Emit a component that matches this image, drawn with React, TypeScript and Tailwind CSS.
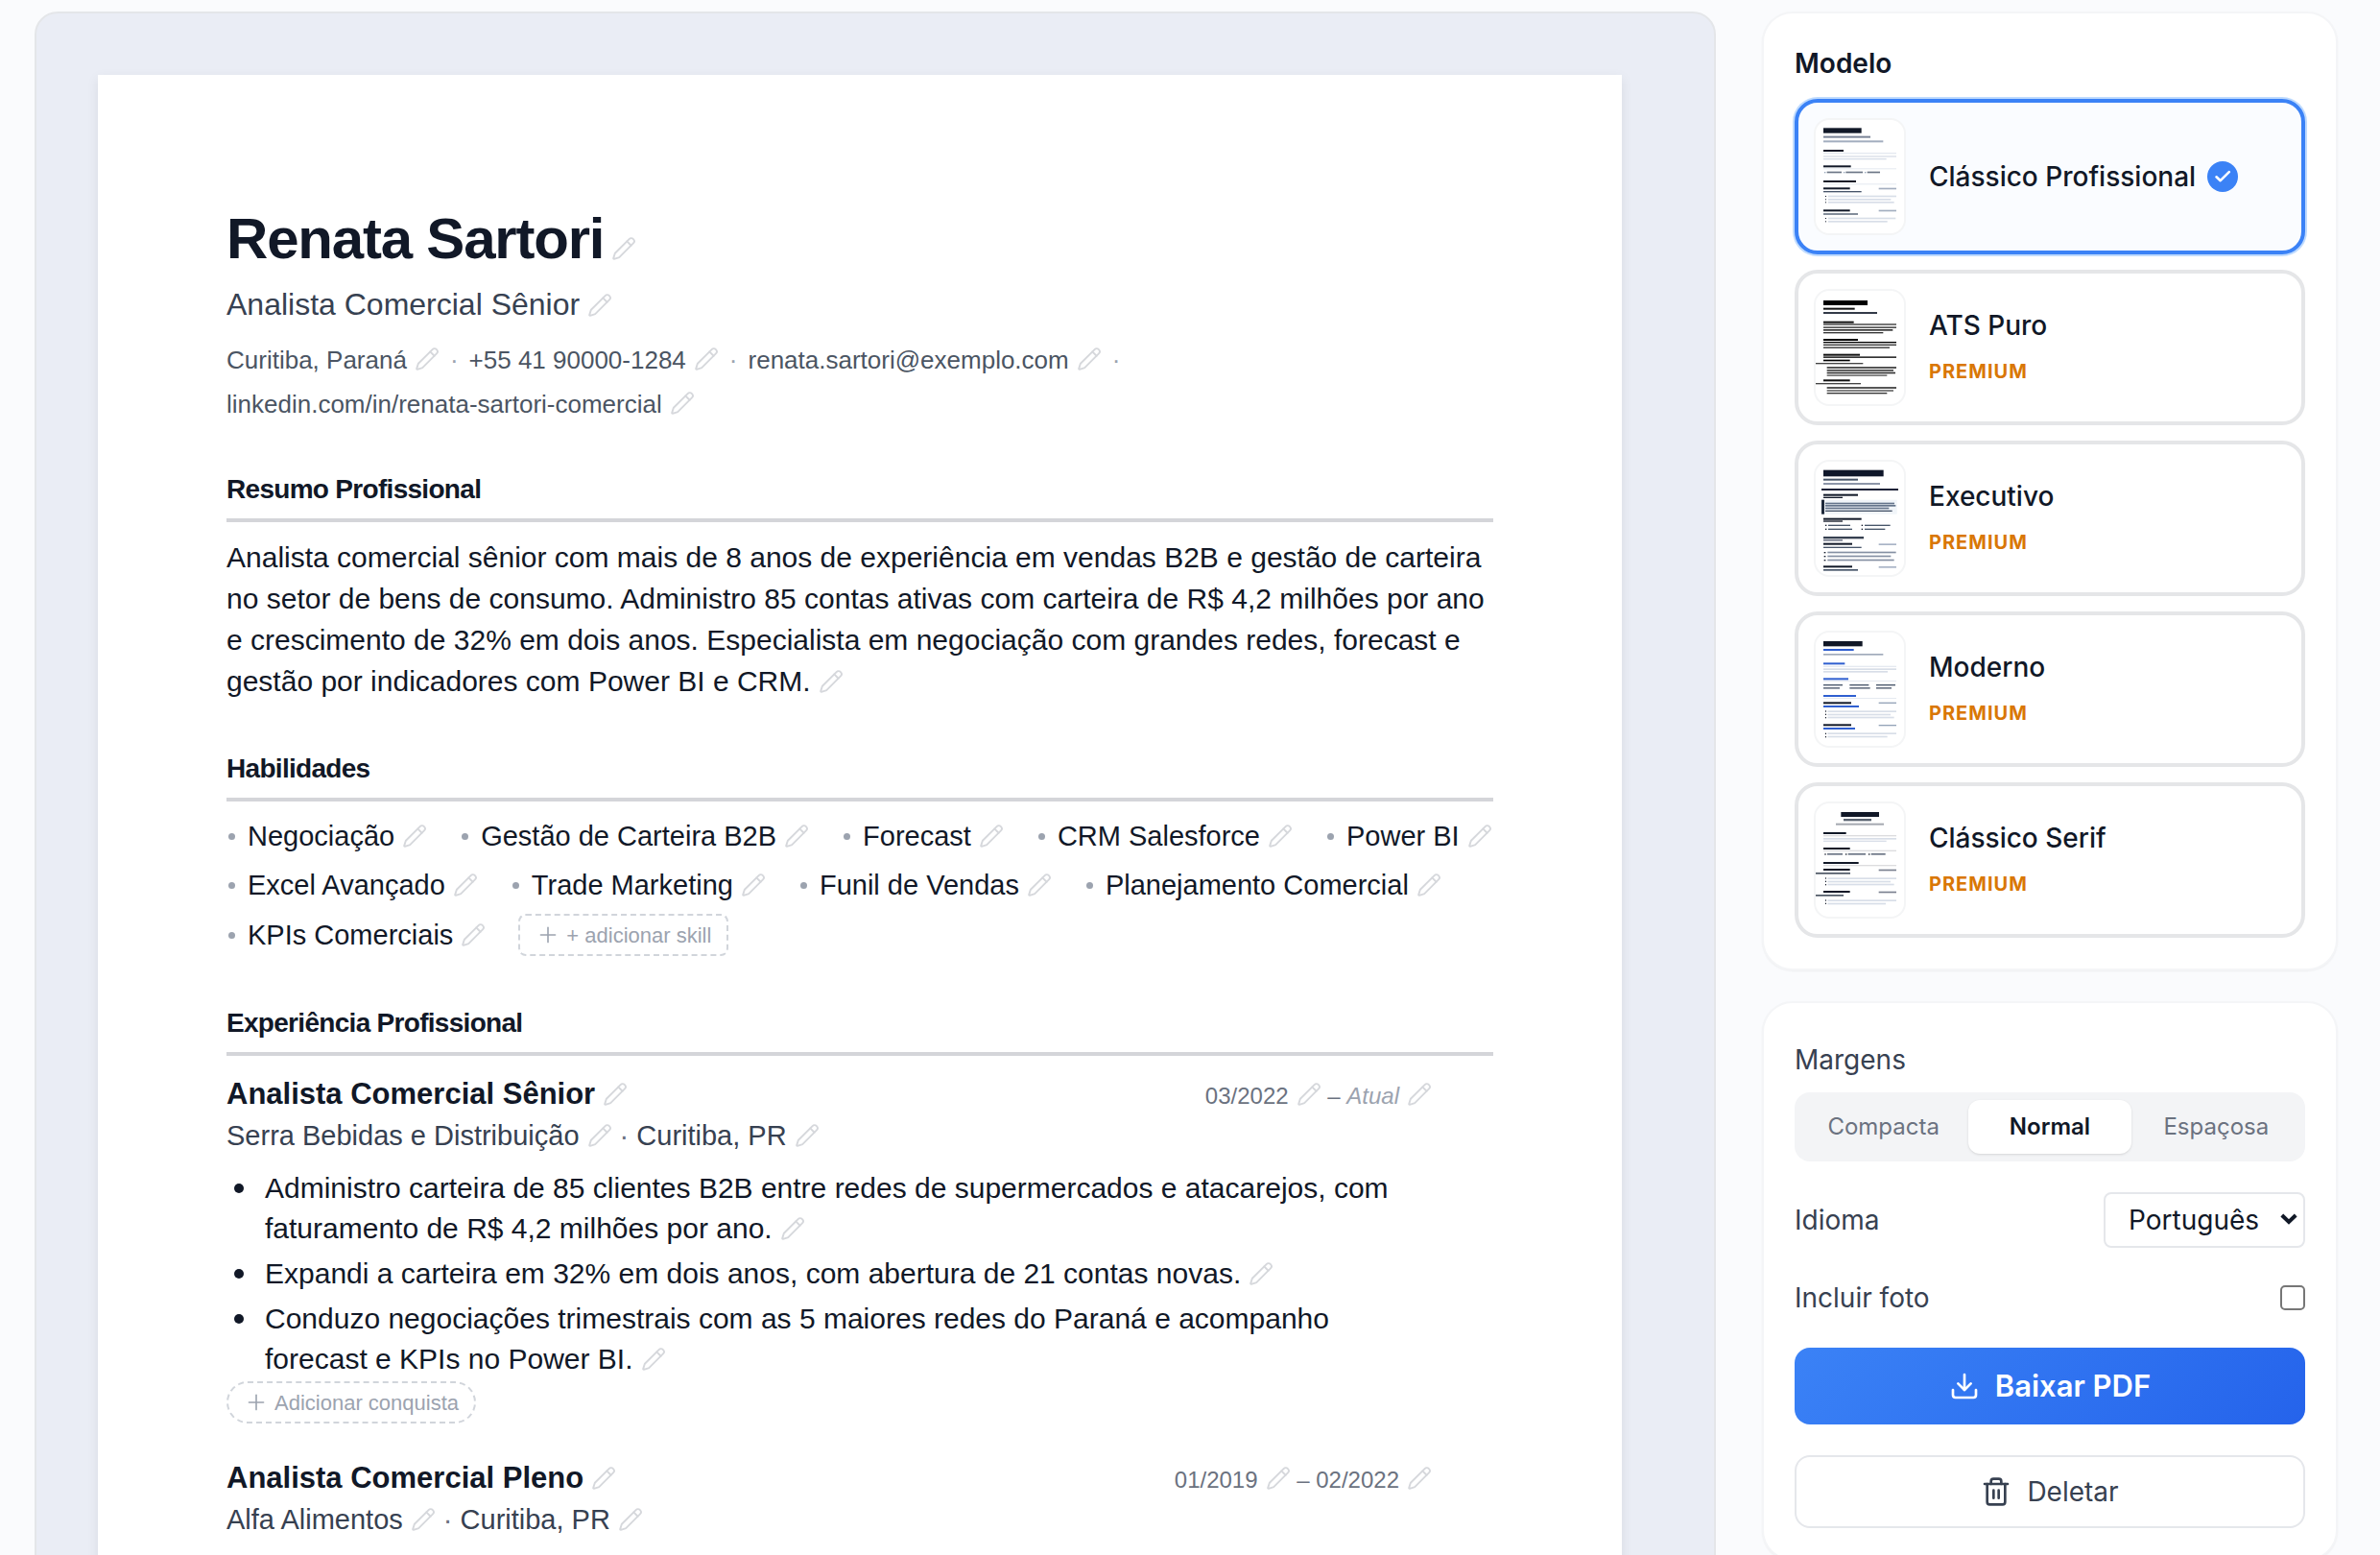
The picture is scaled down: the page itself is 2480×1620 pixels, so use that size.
import React from 'react';
import clsx from 'clsx';
import { Download, Pencil, Plus, Trash2 } from 'lucide-react';

// x, y, width, height, fill
type Bar = [number, number, number, number, string];

interface Template {
  id: string;
  name: string;
  premium: boolean;
  viewBox: string;
  bars: Bar[];
}

interface Job {
  role: string;
  company: string;
  city: string;
  start: string;
  end: string | null;
  achievements: string[];
}

const INK = '#111827';
const SLATE = '#475569';
const MIST = '#94a3b8';
const LINE = '#d8dee8';
const PALE = '#e5e9f0';
const BLUE = '#2f5fd0';

const templates: Template[] = [
  {
    id: 'classic',
    name: 'Clássico Profissional',
    premium: false,
    viewBox: '30 68 288 366',
    bars: [
      [60, 99, 119, 16, INK], [60, 124, 147, 6, '#7b8597'], [60, 138, 187, 6, '#a3aebf'],
      [60, 167, 63, 6, INK], [60, 176, 228, 4, PALE], [60, 186, 228, 4, LINE], [60, 194, 197, 4, LINE],
      [60, 216, 86, 6, INK], [60, 225, 228, 3, PALE],
      [63, 236, 4, 4, MIST], [71, 235, 46, 5, '#6b7585'], [123, 236, 4, 4, MIST], [130, 235, 53, 5, '#6b7585'], [189, 236, 4, 4, MIST], [197, 235, 40, 5, '#6b7585'],
      [60, 263, 102, 6, INK], [60, 273, 228, 3, PALE],
      [60, 285, 83, 6, INK], [233, 286, 55, 5, '#a3aebf'], [60, 296, 119, 4, SLATE],
      [66, 311, 3, 3, INK], [75, 310, 213, 5, LINE], [66, 321, 3, 3, INK], [75, 320, 196, 5, LINE], [66, 330, 3, 3, INK], [75, 329, 206, 5, LINE],
      [60, 354, 83, 6, INK], [233, 355, 55, 5, '#a3aebf'], [60, 366, 108, 4, SLATE],
      [66, 380, 3, 3, INK], [75, 379, 211, 5, LINE], [66, 390, 3, 3, INK], [75, 389, 185, 5, LINE],
    ],
  },
  {
    id: 'ats',
    name: 'ATS Puro',
    premium: true,
    viewBox: '30 600 288 366',
    bars: [
      [60, 636, 138, 15, '#000'], [60, 659, 98, 6, '#111'], [60, 672, 168, 6, '#333a48'],
      [60, 701, 95, 6, '#111'], [60, 708, 228, 6, '#777'], [60, 718, 228, 5, '#555'], [60, 726, 217, 5, '#333'], [60, 735, 187, 4, '#333'],
      [60, 756, 108, 6, '#000'], [60, 765, 228, 4, '#000'], [60, 773, 228, 4, '#333'], [60, 781, 207, 5, '#555'],
      [60, 803, 114, 6, '#111'], [60, 811, 228, 5, '#333'], [60, 821, 83, 5, '#000'], [36, 831, 148, 4, '#444'],
      [71, 843, 217, 6, '#555'], [71, 852, 208, 5, '#444'], [71, 860, 214, 5, '#333'], [71, 868, 188, 5, '#777'],
      [60, 883, 83, 6, '#111'], [36, 894, 141, 4, '#444'],
      [71, 906, 217, 6, '#555'], [71, 916, 208, 4, '#444'], [71, 924, 188, 4, '#333'],
    ],
  },
  {
    id: 'executive',
    name: 'Executivo',
    premium: true,
    viewBox: '30 22 288 366',
    bars: [
      [60, 54, 188, 20, '#0f172a'], [60, 81, 108, 6, '#475569'], [60, 94, 177, 6, '#8c96a8'], [54, 112, 240, 6, '#1e2238'],
      [60, 129, 108, 6, INK], [60, 138, 60, 4, INK],
      [60, 147, 230, 45, '#f1f5f9'], [54, 147, 9, 45, '#1e293b'],
      [66, 156, 216, 5, '#64748b'], [66, 163, 220, 5, '#64748b'], [66, 171, 199, 5, '#64748b'], [66, 180, 209, 4, '#475569'],
      [60, 204, 119, 6, INK], [60, 212, 60, 4, INK],
      [66, 225, 4, 4, INK], [75, 225, 69, 4, SLATE], [179, 225, 4, 4, INK], [189, 225, 80, 4, SLATE],
      [66, 237, 4, 4, INK], [75, 237, 75, 4, SLATE], [179, 237, 4, 4, INK], [189, 237, 64, 4, SLATE],
      [60, 262, 126, 7, '#374151'], [60, 271, 60, 5, '#7b8190'],
      [60, 282, 90, 6, INK], [233, 284, 55, 5, '#a9b4c6'], [60, 294, 119, 4, SLATE],
      [62, 310, 5, 4, INK], [73, 309, 214, 5, '#8590a3'], [62, 322, 5, 4, INK], [73, 321, 198, 5, '#8590a3'], [62, 334, 5, 4, INK], [73, 333, 208, 5, '#8590a3'],
      [60, 353, 90, 6, INK], [233, 355, 55, 5, '#a9b4c6'], [60, 364, 108, 5, SLATE],
    ],
  },
  {
    id: 'modern',
    name: 'Moderno',
    premium: true,
    viewBox: '30 558 288 366',
    bars: [
      [60, 591, 122, 16, INK], [60, 615, 95, 6, BLUE], [60, 630, 187, 5, '#a0aabb'],
      [60, 658, 67, 6, BLUE], [60, 668, 228, 4, PALE], [60, 676, 228, 5, LINE], [60, 684, 201, 5, LINE],
      [60, 706, 78, 6, BLUE], [60, 714, 228, 3, PALE],
      [60, 726, 60, 4, SLATE], [142, 726, 60, 4, SLATE], [225, 726, 60, 4, SLATE],
      [60, 735, 51, 5, '#6b7585'], [142, 735, 64, 5, '#6b7585'], [225, 735, 48, 5, '#6b7585'],
      [60, 759, 102, 6, BLUE], [60, 768, 228, 3, PALE],
      [60, 781, 87, 6, INK], [233, 782, 55, 4, MIST], [60, 792, 111, 6, BLUE],
      [66, 808, 3, 4, INK], [73, 808, 215, 5, LINE], [66, 818, 3, 4, INK], [73, 818, 197, 5, LINE], [66, 828, 3, 4, INK], [73, 827, 208, 5, LINE],
      [60, 850, 87, 6, INK], [233, 852, 55, 4, MIST], [60, 861, 99, 6, BLUE],
      [66, 878, 3, 4, INK], [73, 877, 215, 5, LINE], [66, 888, 3, 4, INK], [73, 887, 187, 5, LINE],
    ],
  },
  {
    id: 'serif',
    name: 'Clássico Serif',
    premium: true,
    viewBox: '30 1098 288 366',
    bars: [
      [115, 1131, 119, 15, INK], [123, 1152, 87, 7, '#5b6472'], [99, 1166, 150, 6, '#a5a9b0'],
      [60, 1194, 71, 6, INK], [60, 1203, 228, 4, '#dcdcde'], [60, 1212, 228, 5, LINE], [60, 1220, 197, 4, LINE],
      [60, 1242, 83, 6, INK], [60, 1250, 228, 4, '#dcdcde'],
      [64, 1261, 4, 4, INK], [72, 1260, 48, 5, '#6b7585'], [129, 1261, 4, 4, INK], [137, 1260, 55, 5, '#6b7585'], [201, 1261, 4, 4, INK], [209, 1260, 45, 5, '#6b7585'],
      [60, 1287, 110, 6, INK], [60, 1296, 228, 4, '#dcdcde'],
      [60, 1308, 83, 6, INK], [233, 1310, 55, 5, '#7b8190'], [36, 1320, 108, 5, '#4b5563'],
      [66, 1336, 3, 4, INK], [73, 1336, 215, 5, LINE], [66, 1346, 3, 4, INK], [73, 1346, 197, 5, LINE], [66, 1356, 3, 4, INK], [73, 1355, 208, 5, LINE],
      [60, 1377, 83, 6, INK], [233, 1379, 55, 5, '#7b8190'], [36, 1389, 87, 5, '#4b5563'],
      [66, 1405, 3, 4, INK], [73, 1405, 215, 5, LINE], [66, 1415, 3, 4, INK], [73, 1415, 182, 5, LINE],
    ],
  },
];

const contacts = ['Curitiba, Paraná', '+55 41 90000-1284', 'renata.sartori@exemplo.com', 'linkedin.com/in/renata-sartori-comercial'];

const skills = [
  'Negociação',
  'Gestão de Carteira B2B',
  'Forecast',
  'CRM Salesforce',
  'Power BI',
  'Excel Avançado',
  'Trade Marketing',
  'Funil de Vendas',
  'Planejamento Comercial',
  'KPIs Comerciais',
];

const jobs: Job[] = [
  {
    role: 'Analista Comercial Sênior',
    company: 'Serra Bebidas e Distribuição',
    city: 'Curitiba, PR',
    start: '03/2022',
    end: null,
    achievements: [
      'Administro carteira de 85 clientes B2B entre redes de supermercados e atacarejos, com faturamento de R$ 4,2 milhões por ano.',
      'Expandi a carteira em 32% em dois anos, com abertura de 21 contas novas.',
      'Conduzo negociações trimestrais com as 5 maiores redes do Paraná e acompanho forecast e KPIs no Power BI.',
    ],
  },
  {
    role: 'Analista Comercial Pleno',
    company: 'Alfa Alimentos',
    city: 'Curitiba, PR',
    start: '01/2019',
    end: '02/2022',
    achievements: [],
  },
];

const margins = ['Compacta', 'Normal', 'Espaçosa'];

const EditButton: React.FC = () => (
  <button type="button" aria-label="Editar" className="ml-2 inline-block align-[-3px] text-[#d6d8dc]">
    <Pencil className="size-[26px]" strokeWidth={1.75} />
  </button>
);

const Section: React.FC<{ title: string; children: React.ReactNode }> = ({ title, children }) => (
  <section className="mt-13">
    <h2 className="border-b-4 border-[#d4d5d9] pb-3 text-[28px] leading-9 font-bold tracking-tight">{title}</h2>
    {children}
  </section>
);

const AddButton: React.FC<{ label: string; className: string }> = ({ label, className }) => (
  <button
    type="button"
    className={clsx('inline-flex h-11 items-center gap-1.5 border-2 border-dashed border-[#d1d5db] px-4 text-[22px] text-[#9ca3af]', className)}
  >
    <Plus className="size-[26px]" strokeWidth={1.5} />
    {label}
  </button>
);

const JobEntry: React.FC<{ job: Job }> = ({ job }) => (
  <article className="pr-16">
    <div className="flex items-baseline justify-between leading-[41px]">
      <h3 className="text-[31px] leading-[41px] font-bold">
        {job.role}
        <EditButton />
      </h3>
      <div className="text-2xl leading-[41px] text-[#6b7280]">
        {job.start}
        <EditButton /> – {job.end ?? <em className="text-[#9ca3af]">Atual</em>}
        <EditButton />
      </div>
    </div>
    <div className="text-[29px] leading-[42px] text-[#374151]">
      {job.company}
      <EditButton /> <span className="text-[#6b7280]">·</span> {job.city}
      <EditButton />
    </div>
    {job.achievements.length > 0 && (
      <>
        <ul className="mt-[13px] mb-0.5 flex flex-col gap-[5px] text-[30px] leading-[42px]">
          {job.achievements.map((text) => (
            <li key={text} className="flex">
              <span className="mt-4 mr-[22px] ml-2 size-2.5 shrink-0 rounded-full bg-[#111827]" />
              <span>
                {text}
                <EditButton />
              </span>
            </li>
          ))}
        </ul>
        <AddButton label="Adicionar conquista" className="rounded-full" />
      </>
    )}
  </article>
);

const Resume: React.FC = () => (
  <div className="mt-16 mr-24 ml-16 bg-white px-[134px] py-[135px] font-['Liberation_Sans',Arial,sans-serif] text-[#111827] shadow-[0_4px_12px_rgba(0,0,0,0.08)]">
    <h1 className="text-6xl leading-[72px] font-bold tracking-[-0.02em]">
      Renata Sartori
      <EditButton />
    </h1>
    <p className="mt-2.5 text-[32px] leading-11 text-[#374151]">
      Analista Comercial Sênior
      <EditButton />
    </p>
    <div className="mt-[17px] flex flex-wrap gap-x-[11px] gap-y-2 text-[26px] leading-[38px] text-[#4b5563]">
      {contacts.map((contact, i) => (
        <React.Fragment key={contact}>
          {i > 0 && <span className="text-[#9ca3af]">·</span>}
          <span>
            {contact}
            <EditButton />
          </span>
        </React.Fragment>
      ))}
    </div>

    <Section title="Resumo Profissional">
      <p className="mt-[15px] text-[30px] leading-[43px]">
        Analista comercial sênior com mais de 8 anos de experiência em vendas B2B e gestão de carteira no setor de bens de consumo.
        Administro 85 contas ativas com carteira de R$ 4,2 milhões por ano e crescimento de 32% em dois anos. Especialista em negociação
        com grandes redes, forecast e gestão por indicadores com Power BI e CRM.
        <EditButton />
      </p>
    </Section>

    <Section title="Habilidades">
      <ul className="mt-[15px] flex flex-wrap gap-x-[34px] gap-y-2 text-[29px] leading-[43px]">
        {skills.map((skill) => (
          <li key={skill} className="flex items-center gap-[13px]">
            <span className="ml-0.5 size-[7px] rounded-full bg-[#9ca3af]" />
            <span>
              {skill}
              <EditButton />
            </span>
          </li>
        ))}
        <li className="flex">
          <AddButton label="+ adicionar skill" className="rounded-lg" />
        </li>
      </ul>
    </Section>

    <Section title="Experiência Profissional">
      <div className="mt-[19px] flex flex-col gap-9">
        {jobs.map((job) => (
          <JobEntry key={job.role} job={job} />
        ))}
      </div>
    </Section>
  </div>
);

const TemplateOption: React.FC<{ template: Template; selected: boolean; onSelect: () => void }> = ({ template, selected, onSelect }) => (
  <button
    type="button"
    aria-pressed={selected}
    onClick={onSelect}
    className={clsx(
      'flex items-center gap-6 rounded-3xl border-4 p-4 text-left',
      selected ? 'border-[#3b82f6] bg-[#fafcff] ring-2 ring-[#bfdbfe]' : 'border-[#e5e6e8] bg-white',
    )}
  >
    <span className="rounded-2xl border-2 border-[#f4f5f6] bg-white">
      <svg viewBox={template.viewBox} className="-m-0.5 h-[122px] w-24">
        {template.bars.map(([x, y, width, height, fill], i) => (
          <rect key={i} x={x} y={y} width={width} height={height} fill={fill} />
        ))}
      </svg>
    </span>
    <span className="flex flex-col gap-2.5">
      <span className="flex items-center gap-3 text-[28px] leading-10 font-medium">
        {template.name}
        {selected && (
          <svg viewBox="0 0 32 32" className="size-8" fill="none">
            <circle cx="16" cy="16" r="16" fill="#3b82f6" />
            <path d="M9.5 16.3 13.7 20.2 22.8 11.2" stroke="#fff" strokeWidth="2.6" strokeLinecap="round" strokeLinejoin="round" />
          </svg>
        )}
      </span>
      {template.premium && <span className="text-xl leading-9 font-bold tracking-wider text-[#d97706]">PREMIUM</span>}
    </span>
  </button>
);

const Sidebar: React.FC = () => {
  const [template, setTemplate] = React.useState('classic');
  const [margin, setMargin] = React.useState('Normal');
  const [withPhoto, setWithPhoto] = React.useState(false);

  return (
    <aside className="flex w-[600px] shrink-0 flex-col gap-8">
      <section className="rounded-[32px] border-2 border-[#f4f5f7] bg-white p-8 shadow-xs">
        <h2 className="mb-4 text-[28px] leading-[41px] font-semibold">Modelo</h2>
        <div className="flex flex-col gap-4">
          {templates.map((item) => (
            <TemplateOption key={item.id} template={item} selected={item.id === template} onSelect={() => setTemplate(item.id)} />
          ))}
        </div>
      </section>

      <section className="flex flex-col gap-8 rounded-[32px] border-2 border-[#f4f5f7] bg-white px-8 pt-[39px] pb-8 text-[28px] leading-10 text-[#374151] shadow-xs">
        <div>
          <div id="margins-label" className="mb-3.5">
            Margens
          </div>
          <div role="group" aria-labelledby="margins-label" className="grid grid-cols-3 gap-1 rounded-2xl bg-[#f3f4f6] p-2 text-2xl">
            {margins.map((item) => (
              <button
                key={item}
                type="button"
                onClick={() => setMargin(item)}
                className={clsx('h-14 rounded-xl', item === margin ? 'bg-white font-semibold text-[#111827] shadow-sm' : 'text-[#6b7280]')}
              >
                {item}
              </button>
            ))}
          </div>
        </div>

        <div className="flex items-center justify-between">
          <label htmlFor="language">Idioma</label>
          <div className="relative">
            <select
              id="language"
              defaultValue="pt"
              className="h-[58px] w-[210px] appearance-none rounded-lg border-2 border-[#e5e7eb] bg-white pl-6 text-[#111827]"
            >
              <option value="pt">Português</option>
              <option value="en">English</option>
              <option value="es">Español</option>
            </select>
            <svg viewBox="0 0 18 12" fill="none" className="pointer-events-none absolute top-[22px] right-2 h-3 w-[18px]">
              <path d="M1.8 2 9 9 16.2 2" stroke="#111827" strokeWidth="4" />
            </svg>
          </div>
        </div>

        <div className="flex items-center justify-between">
          <label htmlFor="photo">Incluir foto</label>
          <input
            id="photo"
            type="checkbox"
            checked={withPhoto}
            onChange={(e) => setWithPhoto(e.target.checked)}
            className="size-[26px] appearance-none rounded-[5px] border-2 border-[#767676] bg-white checked:bg-[#3b82f6]"
          />
        </div>

        <button
          type="button"
          className="flex h-20 items-center justify-center gap-4 rounded-2xl bg-linear-135 from-[#3b82f6] to-[#2563eb] text-[31px] font-semibold text-white"
        >
          <Download className="size-8" />
          Baixar PDF
        </button>

        <button type="button" className="flex h-19 items-center justify-center gap-4 rounded-2xl border-2 border-[#e5e7eb] bg-white">
          <Trash2 className="size-8" />
          Deletar
        </button>
      </section>
    </aside>
  );
};

const App: React.FC = () => (
  <div className="flex h-screen items-start gap-12 overflow-hidden bg-[#fafbfd] pt-3 pr-11 pl-9 font-[Inter,sans-serif] text-[#111827]">
    <main className="min-h-full flex-1 rounded-t-3xl border-2 border-[#e4e6e9] bg-[#eaedf5]">
      <Resume />
    </main>
    <Sidebar />
  </div>
);

export default App;
